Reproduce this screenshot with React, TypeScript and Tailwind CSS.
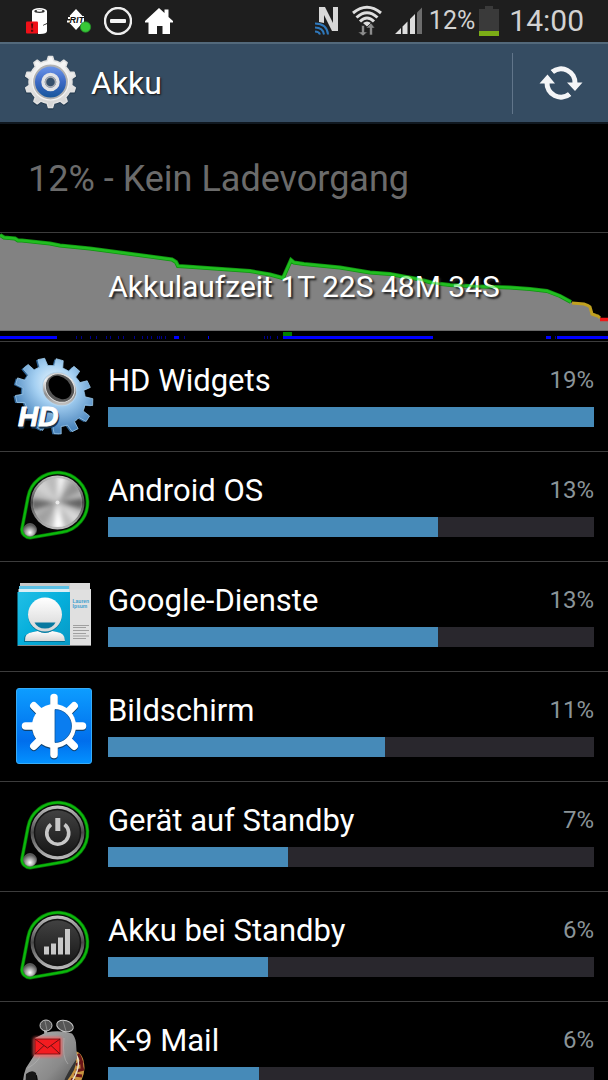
import React from 'react';

const round = (n: number) => Math.round(n * 100) / 100;

function gearPath(cx: number, cy: number, teeth: number, outer: number, inner: number, base: number, tip: number) {
  const step = (Math.PI * 2) / teeth;
  const point = (r: number, a: number) => `${round(cx + r * Math.sin(a))} ${round(cy - r * Math.cos(a))}`;
  let d = '';
  for (let i = 0; i < teeth; i++) {
    const a = i * step;
    d += `${i === 0 ? 'M' : 'L'}${point(inner, a - step * base)}`;
    d += `L${point(outer, a - step * tip)}L${point(outer, a + step * tip)}L${point(inner, a + step * base)}`;
    d += `A${inner} ${inner} 0 0 1 ${point(inner, a + step * (1 - base))}`;
  }
  return d + 'Z';
}

function BatteryAlertIcon() {
  return (
    <svg className="h-7 w-7" viewBox="0 0 28 28" aria-hidden="true">
      <path d="M6 4v18h6v5h2q7 0 7-3V18l-4 1v-1l4-2V4z" fill="#fff" />
      <ellipse cx="13.500" cy="4" rx="7.500" ry="3" fill="#fff" />
      <ellipse cx="13.500" cy="4.200" rx="5.200" ry="1.700" fill="#333" />
      <ellipse cx="13.500" cy="3.800" rx="3" ry="1" fill="#fff" />
      <path d="M13 19.500q4-.2 8-2.500v5q-3 4-8 4z" fill="#fff" />
      <rect x="0" y="14.500" width="12" height="12" rx="1" fill="#f01018" />
      <path d="M5 16.500h2.200l-.5 5h-1.200zM5 22.800h2.200v2H5z" fill="#501010" />
    </svg>
  );
}

function FritzIcon() {
  return (
    <svg className="h-7 w-6 overflow-visible" viewBox="0 0 24 28" aria-hidden="true">
      <path d="M9 2l6.500 7h-13zM2.500 16h13L9 23z" fill="#fff" />
      <path d="M1 10h2v2H1zM0 13.500h3v2H0z" fill="#fff" />
      <rect x="3" y="9" width="14" height="7.500" fill="#fff" />
      <text x="2.500" y="16" fontSize="9" fontWeight="700" fontStyle="italic" fill="#111" fontFamily="Liberation Sans, sans-serif">RIT</text>
      <circle cx="18.500" cy="20" r="5.200" fill="#38c838" stroke="#238c28" strokeWidth=".8" />
    </svg>
  );
}

function BlockIcon() {
  return (
    <svg className="size-7" viewBox="0 0 28 28" aria-hidden="true">
      <circle cx="14" cy="14" r="13" fill="none" stroke="#eee" strokeWidth="2.400" />
      <rect x="6" y="12" width="16" height="4" rx="1" fill="#f4f4f4" />
    </svg>
  );
}

function HomeIcon() {
  return (
    <svg className="size-7" viewBox="0 0 28 28" aria-hidden="true">
      <path d="M14 1l5.500 5V2.500h4V10L28 14v1.500h-3V27h-7.500v-8h-5.500v8H3.500V15.500H0V14z" fill="#fff" />
    </svg>
  );
}

function NfcIcon() {
  return (
    <svg className="h-7 w-6" viewBox="0 0 24 28" aria-hidden="true">
      <path d="M4 15V0h6l8 16V0h5v24h-6L9 8v8z" fill="#d8d8d8" />
      <g fill="none" stroke="#2f78bb" strokeWidth="2">
        <path d="M0 16.500q12 0 13 11" />
        <path d="M0 20.500q8 0 9 7" />
        <path d="M0 24.500q4 0 5 3" />
      </g>
    </svg>
  );
}

function WifiIcon() {
  return (
    <svg className="h-8 w-8" viewBox="0 0 32 32" aria-hidden="true">
      <g fill="none" stroke="#dedede" strokeWidth="3">
        <path d="M2 8Q16-3.500 30 8" />
        <path d="M5.500 12.500Q16 3 26.500 12.500" />
        <path d="M9 16.500Q16 9.500 23 16.500" />
      </g>
      <path d="M12 18q4-3 8 0l-4 3.500z" fill="#dedede" />
      <path d="M10.500 20.500h3V27h3L12 31l-5-4h3.500zM18.500 30v-7H15l5-5 4 5h-2.500v7z" fill="#8c8c8c" stroke="#1e1e1e" strokeWidth=".6" />
    </svg>
  );
}

function SignalIcon() {
  return (
    <svg className="h-7 w-7" viewBox="0 0 28 28" aria-hidden="true">
      <path d="M0 27l6-6v6zM7.500 19.500l5-5V27h-5zM15 12l5-5v20h-5z" fill="#dedede" />
      <path d="M22 5.500l5-5V27h-5z" fill="#6d6d6d" />
    </svg>
  );
}

function BatteryIcon() {
  return (
    <svg className="h-[30px] w-5" viewBox="0 0 20 30" aria-hidden="true">
      <path d="M6 0h8v3h6v27H0V3h6z" fill="#3a3a3a" />
      <rect y="25" width="20" height="5" fill="#7bad16" />
    </svg>
  );
}

function SettingsIcon() {
  return (
    <svg className="size-14" viewBox="0 0 56 56" aria-hidden="true">
      <defs>
        <linearGradient id="set-metal" x1="0" y1="0" x2="0" y2="1">
          <stop offset="0" stopColor="#fafafa" />
          <stop offset="1" stopColor="#d2d2d2" />
        </linearGradient>
        <linearGradient id="set-blue" x1="0" y1="0" x2="0" y2="1">
          <stop offset="0" stopColor="#6b95ea" />
          <stop offset=".5" stopColor="#3c69c4" />
          <stop offset="1" stopColor="#17569c" />
        </linearGradient>
      </defs>
      <path d={gearPath(27.5, 28, 10, 26, 21.500, 0.25, 0.13)} fill="#263c50" stroke="#263c50" strokeWidth="1.500" strokeLinejoin="round" />
      <path d={gearPath(27.5, 27, 10, 25.500, 21.500, 0.25, 0.13)} fill="url(#set-metal)" stroke="#e2e2e2" strokeWidth="1.500" strokeLinejoin="round" />
      <circle cx="27.500" cy="27" r="18" fill="#b2b2b2" stroke="#f4f4f4" strokeWidth="1.200" />
      <circle cx="27.500" cy="27" r="15.500" fill="url(#set-blue)" />
      <circle cx="27.500" cy="27" r="7.500" fill="#3d5f9c" stroke="#e2e4e6" strokeWidth="3.500" />
      <circle cx="27.500" cy="27" r="5" fill="#35506c" stroke="#a8acb0" strokeWidth="1.500" />
    </svg>
  );
}

function RefreshIcon() {
  return (
    <svg className="h-9 w-11" viewBox="0 0 44 36" aria-hidden="true">
      <g fill="none" stroke="#f4f5f7" strokeWidth="5">
        <path d="M13.200 7A14 14 0 0 1 36 18.500" />
        <path d="M30.800 29A14 14 0 0 1 8 17.500" />
      </g>
      <path d="M28 17.500h15.500L36 26zM.5 18.500H16L8.500 9.500z" fill="#f4f5f7" />
      <path d="M10 5l6 6M28 25l6 6" stroke="#354c62" strokeWidth="1.500" />
    </svg>
  );
}

function HdWidgetsIcon() {
  return (
    <svg className="size-full overflow-visible" viewBox="0 0 76 76" aria-hidden="true">
      <defs>
        <radialGradient id="hd-body" cx=".42" cy=".36" r=".6">
          <stop offset="0" stopColor="#f2faff" />
          <stop offset=".45" stopColor="#a5d0f2" />
          <stop offset="1" stopColor="#4c86bd" />
        </radialGradient>
        <linearGradient id="hd-ring" x1="0" y1="0" x2="1" y2="1">
          <stop offset="0" stopColor="#777" />
          <stop offset=".3" stopColor="#f6f6f6" />
          <stop offset=".6" stopColor="#8d8d8d" />
          <stop offset="1" stopColor="#e8e8e8" />
        </linearGradient>
      </defs>
      <g transform="rotate(40 38 38)">
        <path d={gearPath(37, 40, 13, 41, 33, 0.28, 0.19)} fill="#2e6294" transform="translate(38 38) scale(1 .87) translate(-38 -38)" />
        <path d={gearPath(38, 38, 13, 41, 33, 0.28, 0.19)} fill="url(#hd-body)" stroke="#9dc8e8" strokeWidth=".8" transform="translate(38 38) scale(1 .87) translate(-38 -38)" />
      </g>
      <ellipse cx="43.500" cy="31" rx="18" ry="16" transform="rotate(40 43.500 31)" fill="url(#hd-ring)" stroke="#b2d4ee" />
      <ellipse cx="44" cy="30" rx="15.500" ry="13.500" transform="rotate(40 44 30)" fill="#565656" stroke="#e0e0e0" />
      <ellipse cx="44" cy="29.500" rx="13" ry="10" transform="rotate(48 44 29.500)" fill="#000" />
      <g fontFamily="Liberation Sans, sans-serif" fontSize="28" fontWeight="700" fontStyle="italic" strokeLinejoin="round">
        <text x="3" y="69.500" fill="#16324c" stroke="#16324c">HD</text>
        <text x="2" y="67.500" fill="#fff" stroke="#fff">HD</text>
      </g>
    </svg>
  );
}

type KnobKind = 'metal' | 'power' | 'signal';

const WEDGES = [
  [0, 18, '#f4f4f4'], [35, 65, '#929292'], [80, 105, '#606060'], [120, 142, '#dadada'],
  [165, 190, '#ffffff'], [210, 240, '#a0a0a0'], [252, 278, '#666666'], [300, 330, '#d0d0d0'],
] as const;

function wedge(from: number, to: number) {
  const p = (deg: number) => {
    const a = (deg * Math.PI) / 180;
    return `${round(41.5 + 27 * Math.sin(a))} ${round(34.5 - 27 * Math.cos(a))}`;
  };
  return `M41.5 34.5L${p(from)}A27 27 0 0 1 ${p(to)}Z`;
}

function KnobIcon({ kind }: { kind: KnobKind }) {
  const id = `knob-${kind}`;
  return (
    <svg className="size-full" viewBox="0 0 76 76" aria-hidden="true">
      <defs>
        <linearGradient id={`${id}-rim`} x1="0" y1="0" x2="0" y2="1">
          <stop offset="0" stopColor="#c4c4c4" />
          <stop offset=".5" stopColor="#4a4a4a" />
          <stop offset="1" stopColor="#c0c0c0" />
        </linearGradient>
        <linearGradient id={`${id}-face`} x1="0" y1="0" x2="0" y2="1">
          <stop offset="0" stopColor="#424242" />
          <stop offset="1" stopColor="#161616" />
        </linearGradient>
        <radialGradient id={`${id}-ball`} cx=".5" cy=".7" r=".6">
          <stop offset="0" stopColor="#fff" />
          <stop offset=".5" stopColor="#aaa" />
          <stop offset="1" stopColor="#555" />
        </radialGradient>
        <clipPath id={`${id}-clip`}><circle cx="41.500" cy="34.500" r="24.500" /></clipPath>
        <filter id={`${id}-soft`}><feGaussianBlur stdDeviation="2.500" /></filter>
      </defs>
      <path d="M6.100 60L12 29.300A30 30 0 1 1 46 64.200L15.600 69.500A8 8 0 0 1 6.100 60Z" fill="#050505" stroke="#067006" strokeWidth="3.600" />
      <path d="M6.100 60L12 29.300A30 30 0 1 1 46 64.200L15.600 69.500A8 8 0 0 1 6.100 60Z" fill="none" stroke="#0cb80c" strokeWidth="2.200" />
      <circle cx="41.500" cy="34.500" r="27" fill={`url(#${id}-rim)`} />
      {kind === 'metal' ? (
        <g clipPath={`url(#${id}-clip)`}>
          <circle cx="41.500" cy="34.500" r="25" fill="#bcbcbc" />
          <g filter={`url(#${id}-soft)`}>
            {WEDGES.map(([from, to, color]) => <path key={from} d={wedge(from, to)} fill={color} />)}
          </g>
          <circle cx="41.500" cy="34.500" r="2" fill="#fff" opacity=".7" />
        </g>
      ) : (
        <circle cx="41.500" cy="34.500" r="23" fill={`url(#${id}-face)`} stroke="#151515" strokeWidth="1.500" />
      )}
      {kind === 'power' && (
        <g fill="none" stroke="#c8c8c8">
          <path d="M35 26.500a11 11 0 1 0 13.500 0" strokeWidth="3.600" />
          <path d="M41.800 20v13" strokeWidth="5" />
        </g>
      )}
      {kind === 'signal' && (
        <path d="M28 38.500h5v8h-5zM35 35.500h5v11h-5zM42 29.500h5v17h-5zM49 21h5v25.500h-5z" fill="#c8c8c8" />
      )}
      <circle cx="14" cy="62" r="6.500" fill={`url(#${id}-ball)`} stroke="#777" strokeWidth=".6" />
    </svg>
  );
}

function ContactsIcon() {
  return (
    <svg className="size-full" viewBox="0 0 76 76" aria-hidden="true">
      <defs>
        <linearGradient id="card" x1="0" y1="0" x2="1" y2="1">
          <stop offset="0" stopColor="#22bfe6" />
          <stop offset=".5" stopColor="#05aedb" />
          <stop offset="1" stopColor="#0898c4" />
        </linearGradient>
        <linearGradient id="person" x1="0" y1="0" x2="0" y2="1">
          <stop offset="0" stopColor="#fff" />
          <stop offset="1" stopColor="#d6d6d6" />
        </linearGradient>
      </defs>
      <path d="M4 5h70v12H4z" fill="#c9c9c9" />
      <path d="M3 8h50v3H3z" fill="#5dc2e6" />
      <path d="M2.500 11h51v3h-51z" fill="#d9eef5" />
      <path d="M54 5h20v9H54z" fill="#ddd" />
      <path d="M1.500 14H54v54H1.500z" fill="url(#card)" />
      <path d="M54 11h21v57H54z" fill="#e0e0e0" />
      <path d="M8 64q-1-8 8-10l6-1q8 3 13 0l6 1q8 2 8 10z" fill="#066f92" />
      <path d="M9 63q-1-8 8-9l5-1q7 4 14 0l5 1q8 1 8 9z" fill="url(#person)" />
      <circle cx="29" cy="37.500" r="17" fill="#067ba0" />
      <circle cx="29" cy="36.500" r="17" fill="url(#person)" />
      <path d="M18.500 44.500h21q-3 6-10.500 6t-10.500-6z" fill="#0879a0" />
      <g fill="#3e9fcf" fontSize="5" fontWeight="700" fontFamily="Liberation Sans, sans-serif">
        <text x="56.500" y="24.500">Lauren</text>
        <text x="56.500" y="29.500">Ipsum</text>
      </g>
      <path d="M57 47.500h16M57 49.500h13M57 52.500h16M57 55.500h13M57 58h16M57 60.500h13" stroke="#999" strokeWidth=".9" />
      <path d="M2 67.500h73" stroke="#888" />
    </svg>
  );
}

function DisplayIcon() {
  const rays = [0, 45, 90, 135, 180, 225, 270, 315];
  const sun = (color: string) => (
    <g stroke={color} strokeLinecap="round" fill={color}>
      {rays.map((r) => <path key={r} d="M38 9.500V20" strokeWidth="7.500" transform={`rotate(${r} 38 38)`} />)}
      <circle cx="38" cy="38" r="22" stroke="none" />
    </g>
  );
  return (
    <svg className="size-full" viewBox="0 0 76 76" aria-hidden="true">
      <defs>
        <linearGradient id="disp" x1="0" y1="0" x2="0" y2="1">
          <stop offset="0" stopColor="#0d9dff" />
          <stop offset=".7" stopColor="#006eec" />
          <stop offset="1" stopColor="#0492ff" />
        </linearGradient>
      </defs>
      <rect x=".5" y=".5" width="75" height="75" rx="2.500" fill="url(#disp)" stroke="#37acf8" />
      <g transform="translate(0 1.200)">{sun('#10436f')}</g>
      {sun('#fff')}
      <path d="M39 21.500a16.500 16.500 0 0 1 0 33z" fill="#0a7df0" stroke="#0b559c" strokeWidth=".8" />
    </svg>
  );
}

function MailIcon() {
  return (
    <svg className="size-full" viewBox="0 0 76 76" aria-hidden="true">
      <defs>
        <linearGradient id="dog" x1="0" y1="0" x2="1" y2="1">
          <stop offset="0" stopColor="#b0b0b0" />
          <stop offset=".6" stopColor="#8a8a8a" />
          <stop offset="1" stopColor="#4c4c4c" />
        </linearGradient>
        <filter id="dog-glow"><feGaussianBlur stdDeviation="1.500" /></filter>
      </defs>
      <path d="M59 33q9 2 9.500 17Q68 66 52 76H40l10-22z" fill="#c89440" />
      <path d="M62 36q4 5 4 14M67 43l-7 4M68 51l-8 2M66 58l-8-1M62 65l-7-4M55 72l-5-4" fill="none" stroke="#6b1618" strokeWidth="3" />
      <path d="M59 35q9 12-6 33" fill="none" stroke="#e8e0cc" strokeWidth="1.500" />
      <path d="M58 36q7 11-9 29l-6-6z" fill="#333" />
      <path d="M30 16l-1-5M47 16l2-5" stroke="#aaa" strokeWidth="3" />
      <path d="M19 20l11-5.500q14-3 26 1 3 3 4 9l1 16q-6 8-12 20l-5 15H24l-3-18q-4-5-10-1L9 66v8H7q-1-14 3-24l9-14z" fill="url(#dog)" />
      <path d="M48 20q-2 20 4 26M12 50q10-6 12-12" fill="none" stroke="#b8b8b8" strokeWidth="1" opacity=".6" />
      <path d="M10 56q6-5 10-1l1 10v10H9z" fill="#171717" />
      <g fill="#555" stroke="#ccc" strokeWidth="1">
        <ellipse cx="30" cy="7.500" rx="6" ry="5.500" />
        <ellipse cx="49" cy="8" rx="8.500" ry="5.500" transform="rotate(18 49 8)" />
      </g>
      <path d="M29 3l2 9M47 3l3 10" stroke="#888" />
      <rect x="17" y="19" width="29" height="20" rx="3" fill="#ff5c5c" opacity=".8" filter="url(#dog-glow)" />
      <rect x="19" y="21" width="25" height="15" fill="#f41c20" stroke="#6d1012" strokeWidth=".8" />
      <path d="M19 21l12.500 9L44 21M19 36l9-8.500M44 36l-9-8.500" fill="none" stroke="#6d1012" strokeWidth="1" />
    </svg>
  );
}

const CURVE = '0,3 4,5.5 15,6.5 18,8.5 22,8.5 50,11.5 60,13.5 90,16.5 120,20.5 150,24.5 172,27.5 176,30 178,34 186,34.5 250,39 270,42.5 283,46 291,28 294,30.5 304,32 340,35.5 370,40.5 390,42 420,47.5 433,51 450,53 480,54.5 510,55.5 530,57 547,59 560,64 571,70';
const LOW = '572,71 584,72 588,73.5 590,75 592,82 596,83.5 598,84 600,86';

const ACTIVE = [
  [0, 57], [174, 5], [208, 1], [283, 150], [546, 5], [557, 51],
] as const;
const BRIEF = [76, 81, 90, 96, 106, 110, 118, 123, 134, 142, 147, 151, 157, 159, 161, 165, 184, 264, 267, 270, 277, 555];

function HistoryChart() {
  return (
    <section className="relative border-t border-[#3c3c3c]">
      <svg className="block h-[108px] w-full" viewBox="0 1 608 108" preserveAspectRatio="none" role="img" aria-label="Akkuverlauf">
        <polygon points={`${CURVE} ${LOW} 608,87 608,98 0,98`} fill="#828282" />
        <path d="M0 98.500h608" stroke="#686868" />
        <polyline points={CURVE} fill="none" stroke="#109410" strokeWidth="4" />
        <polyline points={LOW} fill="none" stroke="#c0a020" strokeWidth="3" />
        <path d="M600 87.500h8" stroke="#f01818" strokeWidth="3.500" />
        <rect x="283" y="100" width="9" height="4" fill="#008000" />
        {ACTIVE.map(([x, w]) => <rect key={x} x={x} y="104" width={w} height="3" fill="#0000ff" />)}
        {BRIEF.map((x) => <rect key={x} x={x} y="104" width="1" height="3" fill="#000090" />)}
      </svg>
      <p className="absolute inset-x-0 top-9 text-center text-[30px] leading-9 text-white [text-shadow:2px_2px_2px_#222]">
        Akkulaufzeit 1T 22S 48M 34S
      </p>
      <svg className="absolute inset-x-0 top-0 h-[108px] w-full" viewBox="0 1 608 108" preserveAspectRatio="none" aria-hidden="true">
        <polyline points={CURVE} fill="none" stroke="#30e030" strokeOpacity=".55" strokeWidth="2.500" />
      </svg>
    </section>
  );
}

const APPS = [
  { name: 'HD Widgets', percent: 19, fill: 100, icon: <HdWidgetsIcon /> },
  { name: 'Android OS', percent: 13, fill: 68, icon: <KnobIcon kind="metal" /> },
  { name: 'Google-Dienste', percent: 13, fill: 68, icon: <ContactsIcon /> },
  { name: 'Bildschirm', percent: 11, fill: 57, icon: <DisplayIcon /> },
  { name: 'Gerät auf Standby', percent: 7, fill: 37, icon: <KnobIcon kind="power" /> },
  { name: 'Akku bei Standby', percent: 6, fill: 33, icon: <KnobIcon kind="signal" /> },
  { name: 'K-9 Mail', percent: 6, fill: 31, icon: <MailIcon /> },
];

export default function App() {
  return (
    <div className="h-screen overflow-hidden bg-black font-['Roboto','Noto_Sans',sans-serif] text-white">
      <div className="flex h-[42px] items-center justify-between bg-[#1e1e1e] pr-6 pl-[26px] text-[#d2d2d2]">
        <div className="flex items-center gap-[13px]">
          <BatteryAlertIcon />
          <FritzIcon />
          <BlockIcon />
          <HomeIcon />
        </div>
        <div className="flex items-center">
          <NfcIcon />
          <span className="ml-3"><WifiIcon /></span>
          <span className="ml-3"><SignalIcon /></span>
          <span className="ml-1.5 text-[25px] leading-8">12%</span>
          <span className="ml-1"><BatteryIcon /></span>
          <span className="ml-2.5 text-[30px] leading-8">14:00</span>
        </div>
      </div>

      <header className="flex h-[82px] items-center border-t-2 border-b-2 border-t-[#53697b] border-b-[#101820] bg-[#354c62] pl-[23px]">
        <SettingsIcon />
        <h1 className="ml-3 flex-1 text-[32px] leading-10 [text-shadow:1px_1px_2px_#111]">Akku</h1>
        <div className="h-[61px] w-px bg-[#61758a]" />
        <button type="button" aria-label="Aktualisieren" className="flex h-full w-[95px] items-center justify-center">
          <RefreshIcon />
        </button>
      </header>

      <main>
        <p className="flex h-[108px] items-center px-7 pt-0.5 text-[36px] leading-[44px] text-[#6b6b6b]">12% - Kein Ladevorgang</p>
        <HistoryChart />
        <ul>
          {APPS.map((app) => (
            <li key={app.name} className="flex h-[110px] gap-4 border-t border-[#3c3c3c] pt-4 pr-3.5 pl-4">
              <div className="size-[76px] shrink-0">{app.icon}</div>
              <div className="min-w-0 flex-1 pt-1">
                <div className="flex h-[45px] items-start justify-between">
                  <span className="text-[31px] leading-[38px]">{app.name}</span>
                  <span className="text-[24px] leading-9 text-[#8a9498]">{app.percent}%</span>
                </div>
                <div className="h-5 bg-[#29272d]">
                  <div className="h-full bg-[#468ab8]" style={{ width: `${app.fill}%` }} />
                </div>
              </div>
            </li>
          ))}
        </ul>
      </main>
    </div>
  );
}
